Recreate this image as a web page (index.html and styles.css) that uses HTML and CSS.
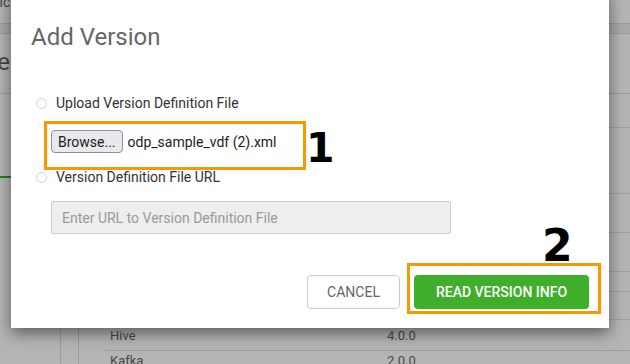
FILE: index.html
```html
<!DOCTYPE html>
<html lang="en">
<head>
    <meta charset="UTF-8">
    <title>Add Version</title>
    <link rel="stylesheet" href="styles.css">
</head>
<body>
    <div id="page">
        <div class="crumbs"><span class="crumb_text">Basic</span></div>
        <div class="tabs"></div>
        <div class="page_head"><span class="page_title">Name</span></div>
        <div class="page_main">
            <aside class="side"><div class="side_item"></div></aside>
            <div class="gutter"></div>
            <div class="stack">
                <div class="stack_row h34"></div>
                <div class="stack_row h66"></div>
                <div class="stack_row h39"></div>
                <div class="stack_row h39"></div>
                <div class="stack_row h20"></div>
                <div class="stack_row h28"></div>
                <div class="stack_gap"></div>
                <div class="svc_row"><span class="svc_name">Hive</span><span>4.0.0</span></div>
                <div class="svc_row"><span class="svc_name">Kafka</span><span>2.0.0</span></div>
            </div>
        </div>
        <div class="dim"></div>
    </div>

    <div id="modal">
        <header class="modal_header">
            <h1>Add Version</h1>
        </header>
        <section class="modal_body">
            <label class="radio_row first">
                <input type="radio" name="src">
                <span>Upload Version Definition File</span>
            </label>
            <div class="file_row">
                <div class="file_mark">
                    <button class="browse" type="button">Browse...</button>
                    <span class="file_name">odp_sample_vdf (2).xml</span>
                </div>
                <span class="step one">1</span>
            </div>
            <label class="radio_row">
                <input type="radio" name="src">
                <span>Version Definition File URL</span>
            </label>
            <input class="url" type="text" placeholder="Enter URL to Version Definition File" readonly>
        </section>
        <footer class="modal_footer">
            <button class="btn cancel" type="button">Cancel</button>
            <div class="read_mark">
                <button class="btn read" type="button">Read Version Info</button>
                <span class="step two">2</span>
            </div>
        </footer>
    </div>
</body>
</html>
```

FILE: styles.css
```css
/* reset */
html, body {margin: 0; padding: 0;}
body {
    width: 630px;
    height: 364px;
    overflow: hidden;
    position: relative;
    font-family: 'Roboto', 'Liberation Sans', sans-serif;
    background: #fff;
}
h1 {margin: 0;}
button, input {font-family: inherit;}

/* page behind the dialog */
#page {
    position: relative;
    height: 364px;
    color: #666;
    font-size: 13px;
}
.crumbs {
    display: flow-root; /* keep the negative margin inside */
    height: 23px;
    border-bottom: 1px solid #ddd;
}
.crumb_text {
    display: block;
    margin: -8px 0 0 -24px;
    font-size: 14px;
    line-height: 20px;
}
.tabs {
    height: 9px;
    background: #f0f0f0;
    border-bottom: 1px solid #ddd;
}
.page_head {
    height: 60px;
    border-bottom: 1px solid #ddd;
    box-sizing: border-box;
    padding-top: 14px;
}
.page_title {
    display: block;
    margin-left: -54px;
    font-size: 24px;
    line-height: 28px;
}
.page_main {
    display: grid;
    grid-template-columns: 61px 18px 1fr;
}
.side {border-right: 1px solid #ddd;}
.side_item {
    height: 82px;
    border-bottom: 2px solid #3fae2a;
}
.gutter {border-right: 1px solid #ddd;}
.stack_row {border-bottom: 1px solid #e4e4e4;}
.h34 {height: 33px;}
.h66 {height: 65px;}
.h39 {height: 38px;}
.h20 {height: 19px;}
.h28 {height: 27px;}
.stack_gap {height: 6px;}
.svc_row {
    display: flex;
    margin-left: 26px;
    padding: 0 0 4px 5px;
    line-height: 20px;
    border-bottom: 1px solid #ddd;
}
.svc_name {width: 277px;}
.dim {
    position: absolute;
    inset: 0;
    background: rgba(0, 0, 0, 0.29);
}

/* dialog */
#modal {
    position: absolute;
    left: 11px;
    top: -10px;
    width: 598px;
    background: #fff;
    box-shadow: 0 5px 15px rgba(0, 0, 0, 0.5);
}
.modal_header {padding: 33px 20px 0;}
.modal_header > h1 {
    font-size: 24px;
    line-height: 28px;
    font-weight: 400;
    color: #666;
}
.modal_body {
    padding: 0 25px;
    display: flex;
    flex-direction: column;
    align-items: flex-start;
}
.radio_row {
    display: flex;
    align-items: center;
    height: 20px;
    font-size: 14px;
    line-height: 20px;
    color: #333;
}
.radio_row.first {margin-top: 42px;}
.radio_row > input {
    appearance: none;
    width: 11px;
    height: 11px;
    margin: 0 9px 0 0;
    border: 1px solid #d2d2d2;
    border-radius: 50%;
    background: #fff;
    box-sizing: border-box;
}

/* file picker with its marker */
.file_row {
    display: flex;
    margin: 11px 0 0 11px;
}
.file_mark {
    display: flex;
    align-items: center;
    width: 256px;
    height: 43px;
    box-sizing: border-box;
    padding: 0 4px 8px;
    outline: 3px solid #fb9700;
}
.browse {
    height: 23px;
    padding: 0 6px;
    border: 1px solid #8f8f9d;
    border-radius: 4px;
    background: #e9e9ed;
    color: #1b1b1b;
    font-size: 14px;
}
.file_name {
    margin-left: 5px;
    font-size: 14px;
    color: #1b1b1b;
}
.step {
    font-family: 'DejaVu Sans', sans-serif;
    font-weight: 700;
    color: #000;
}
.step.one {
    margin-left: 3px;
    height: 43px;
    font-size: 41px;
    line-height: 49px;
}

.url {
    width: 400px;
    height: 33px;
    margin: 14px 0 0 15px;
    padding: 0 10px;
    box-sizing: border-box;
    border: 1px solid #ccc;
    border-radius: 2px;
    background: #eee;
    font-size: 14px;
    color: #555;
    outline: none;
}
.url::placeholder {color: #9a9a9a; opacity: 1;}

/* footer buttons */
.modal_footer {
    display: flex;
    justify-content: flex-end;
    align-items: flex-start;
    gap: 14px;
    margin-top: 41px;
    padding: 0 20px 19px;
}
.btn {
    height: 34px;
    box-sizing: border-box;
    border-radius: 4px;
    font-size: 14px;
    text-transform: uppercase;
}
.cancel {
    width: 93px;
    border: 1px solid #ccc;
    background: #fff;
    color: #666;
}
.read_mark {
    position: relative;
    display: flex;
    padding: 9px 9px 2px 4px;
    margin: -9px -9px -2px -4px;
    outline: 3px solid #fb9700;
}
.read {
    width: 175px;
    border: none;
    background: #3fae2a;
    color: #fff;
    font-weight: 500;
}
.step.two {
    position: absolute;
    left: 132px;
    top: -42px;
    font-size: 44px;
    line-height: 44px;
}
```
